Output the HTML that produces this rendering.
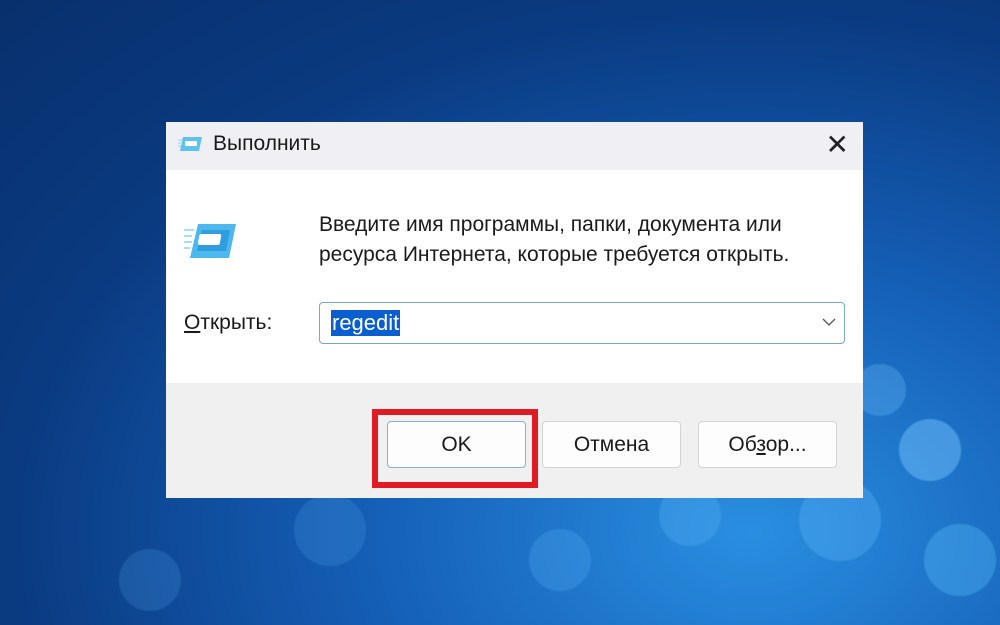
<!DOCTYPE html>
<html><head><meta charset="utf-8"><style>
*{margin:0;padding:0;box-sizing:border-box}
body{width:1000px;height:625px;overflow:hidden;position:relative;font-family:"Liberation Sans","DejaVu Sans",sans-serif;
background:
radial-gradient(circle at 930px 450px,rgba(120,200,255,.45) 0,rgba(120,200,255,.45) 30px,transparent 32px),
radial-gradient(circle at 840px 520px,rgba(90,180,250,.35) 0,rgba(90,180,250,.35) 40px,transparent 42px),
radial-gradient(circle at 690px 515px,rgba(90,180,250,.3) 0,rgba(90,180,250,.3) 30px,transparent 32px),
radial-gradient(circle at 960px 560px,rgba(90,190,250,.35) 0,rgba(90,190,250,.35) 35px,transparent 37px),
radial-gradient(circle at 560px 560px,rgba(90,180,250,.25) 0,rgba(90,180,250,.25) 30px,transparent 32px),
radial-gradient(circle at 330px 530px,rgba(90,170,240,.2) 0,rgba(90,170,240,.2) 35px,transparent 37px),
radial-gradient(circle at 150px 580px,rgba(90,170,240,.2) 0,rgba(90,170,240,.2) 30px,transparent 32px),
radial-gradient(circle at 880px 390px,rgba(110,190,250,.3) 0,rgba(110,190,250,.3) 25px,transparent 27px),
radial-gradient(ellipse at 75% 85%,#2a8fe0 0%,#1560b8 35%,#0a3a80 70%,#08306c 100%);}
.dlg{position:absolute;left:166px;top:122px;width:697px;height:376px;background:#fff;}
.title{height:48px;background:#f0eff4;position:relative}
.title span{position:absolute;left:47px;top:10px;font-size:21px;color:#1a1a1a}
.x{position:absolute;right:14px;top:6px;font-size:28px;color:#222;font-weight:300}
.body{position:absolute;top:48px;left:0;right:0;height:213px;background:#fff}
.desc{position:absolute;left:153px;top:40px;font-size:21px;line-height:30px;color:#1a1a1a}
.lbl{position:absolute;left:18px;top:141px;font-size:21px;color:#1a1a1a}
.inp{position:absolute;left:153px;top:132px;width:526px;height:42px;border:1px solid #7aa4d6;border-radius:4px;background:#fff}
.inp span{position:absolute;left:11px;top:7px;font-size:22px;background:#0a5fd0;color:#fff;padding:0 1px}
.foot{position:absolute;top:261px;left:0;right:0;bottom:0;background:#f0f0f0}
.btn{position:absolute;top:38px;width:139px;height:47px;background:#fdfdfd;border:1px solid #d3d3d3;border-radius:4px;font-size:21px;color:#1a1a1a;text-align:center;line-height:45px}
.red{position:absolute;left:372px;top:409px;width:166px;height:79px;border:6px solid #e01b24}
</style></head><body>
<div class="dlg">
 <div class="title">
  <svg style="position:absolute;left:12px;top:12px" width="26" height="20" viewBox="0 0 26 20"><path d="M5 3h19l-3 14H2z" fill="#5cc2f0"/><rect x="7" y="7" width="12" height="5" rx="1" fill="#fff"/><path d="M0 6h4M0 9h3M0 12h3" stroke="#8fd6f5"/></svg>
  <span>Выполнить</span><div class="x">✕</div>
 </div>
 <div class="body">
  <svg style="position:absolute;left:18px;top:50px" width="54" height="42" viewBox="0 0 54 42"><path d="M14 4h38l-7 34H6z" fill="#4cb8ee"/><path d="M18 10h28l-4 21H13z" fill="#2f9ee0"/><rect x="18" y="14" width="22" height="11" rx="2" fill="#fff" transform="skewX(-10)"/><path d="M0 10h10M0 16h8M0 22h8M0 28h6" stroke="#a6e0f8" stroke-width="2"/></svg>
  <div class="desc">Введите имя программы, папки, документа или<br>ресурса Интернета, которые требуется открыть.</div>
  <div class="lbl"><u>О</u>ткрыть:</div>
  <div class="inp"><span>regedit</span><svg style="position:absolute;right:8px;top:15px" width="14" height="9" viewBox="0 0 14 9"><path d="M1 1l6 6 6-6" fill="none" stroke="#555" stroke-width="1.3"/></svg></div>
 </div>
 <div class="foot">
  <div class="btn" style="left:221px;border-color:#8ab0d8">OK</div>
  <div class="btn" style="left:376px">Отмена</div>
  <div class="btn" style="left:532px">Об<u>з</u>ор...</div>
 </div>
</div>
<div class="red"></div>
</body></html>
